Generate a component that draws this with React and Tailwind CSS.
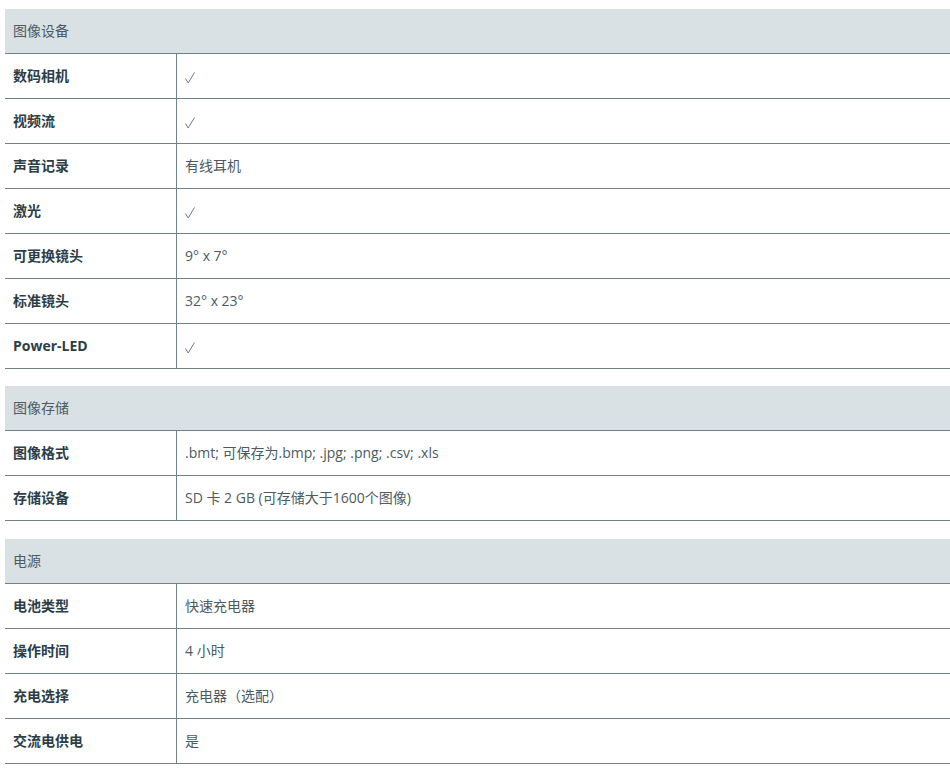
import React from 'react';

const sections = [
  {
    title: '图像设备',
    rows: [
      ['数码相机', '√'],
      ['视频流', '√'],
      ['声音记录', '有线耳机'],
      ['激光', '√'],
      ['可更换镜头', '9° x 7°'],
      ['标准镜头', '32° x 23°'],
      ['Power-LED', '√'],
    ],
  },
  {
    title: '图像存储',
    rows: [
      ['图像格式', '.bmt; 可保存为.bmp; .jpg; .png; .csv; .xls'],
      ['存储设备', 'SD 卡 2 GB (可存储大于1600个图像)'],
    ],
  },
  {
    title: '电源',
    rows: [
      ['电池类型', '快速充电器'],
      ['操作时间', '4 小时'],
      ['充电选择', '充电器（选配）'],
      ['交流电供电', '是'],
    ],
  },
];

const Check = () => (
  <svg width="10" height="12" viewBox="0 0 10 12" className="mt-[5px]" aria-label="√">
    <path d="M0.5 6.5 L3.2 11 L9.5 0.5" fill="none" stroke="#6d7c85" strokeWidth="1" />
  </svg>
);

const SpecTable = ({ title, rows }) => {
  return (
    <div className="w-full">
      <div className="h-[45px] flex items-center px-2 pb-[2px] bg-[#dae1e4] border-b border-[#6f8189] text-[14px] text-[#4b5a63]">
        {title}
      </div>
      {rows.map(([label, value]) => (
        <div key={label} className="flex h-[45px] border-b border-[#6f8189] text-[14px]">
          <div className="w-[172px] shrink-0 flex items-center px-2 pb-[2px] border-r border-[#6f8189] font-bold text-[#2c3d47]">
            {label}
          </div>
          <div className="flex-1 flex items-center px-2 pb-[2px] text-[#4b5a63]">
            {value === '√' ? <Check /> : value}
          </div>
        </div>
      ))}
    </div>
  );
};

const App = () => {
  return (
    <div
      className="bg-white min-h-[770px] pl-[5px] pt-[9px] flex flex-col"
      style={{ fontFamily: '"Open Sans", "Noto Sans CJK SC", sans-serif' }}
    >
      <SpecTable {...sections[0]} />
      <div className="h-[17px]" />
      <SpecTable {...sections[1]} />
      <div className="h-[18px]" />
      <SpecTable {...sections[2]} />
    </div>
  );
};

export default App;
